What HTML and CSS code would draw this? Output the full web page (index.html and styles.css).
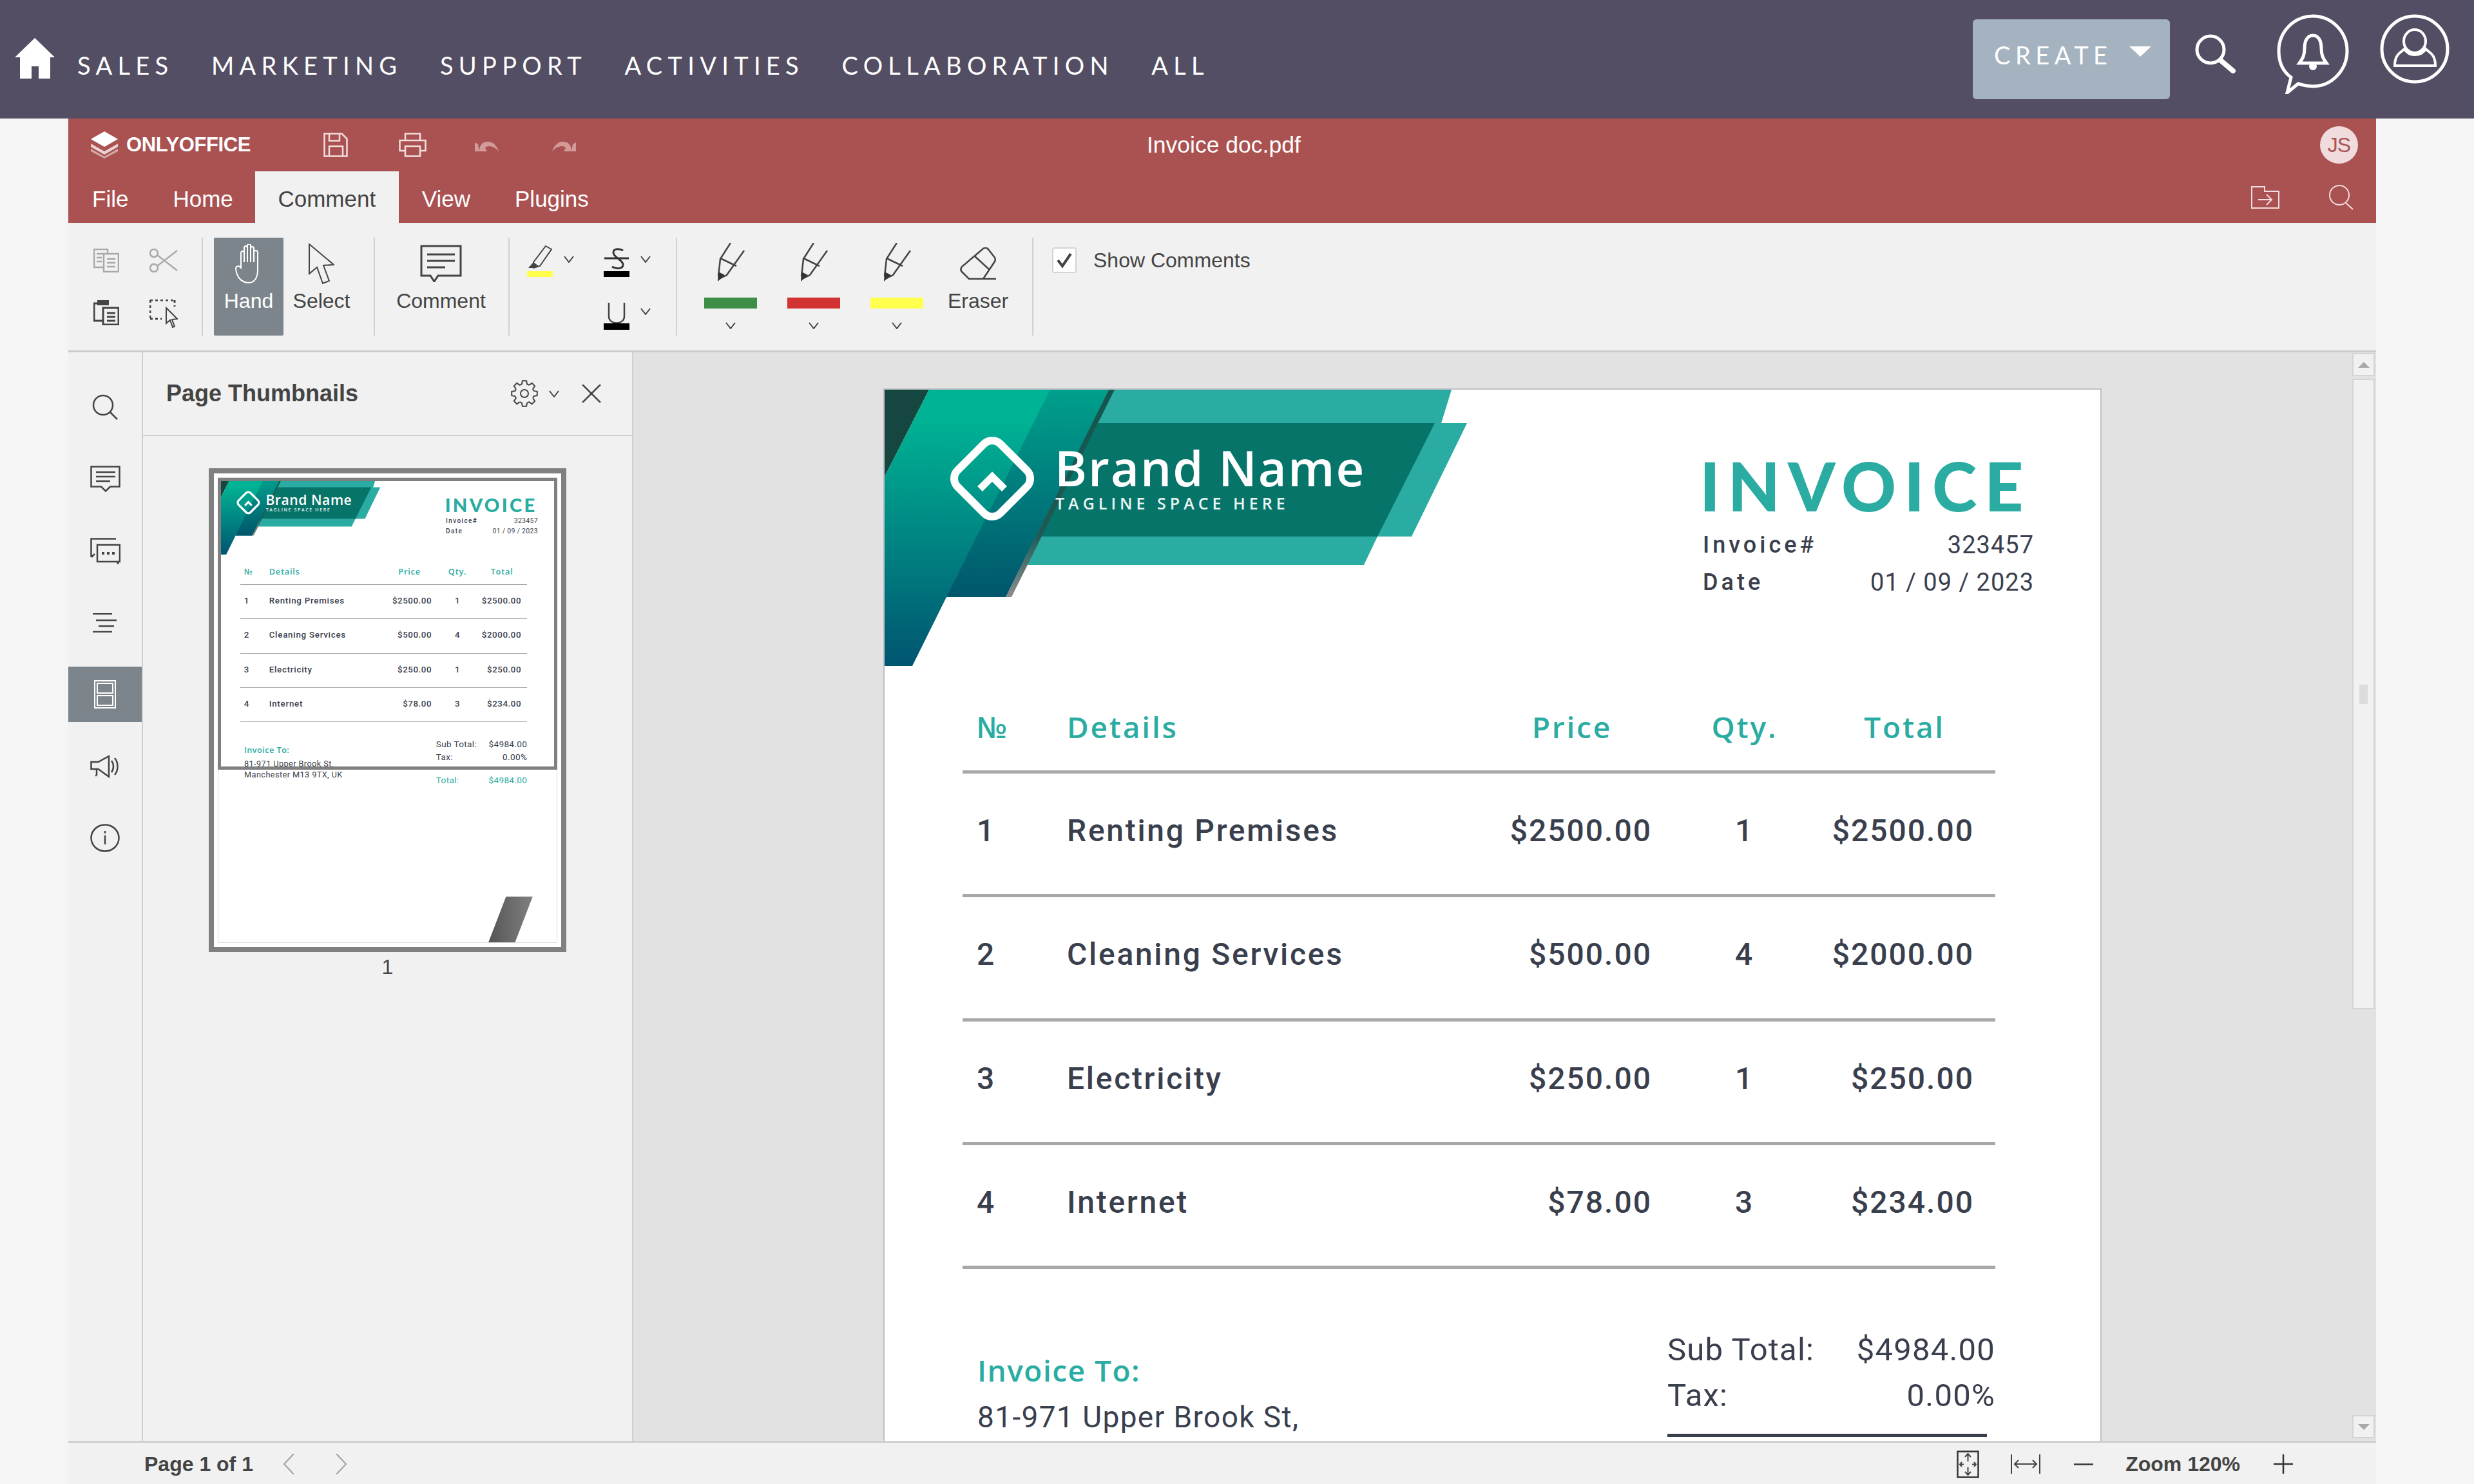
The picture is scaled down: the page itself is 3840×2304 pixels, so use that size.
FILE: index.html
```html
<!DOCTYPE html>
<html lang="en">
<head>
    <meta charset="UTF-8">
    <title>Invoice doc.pdf - ONLYOFFICE</title>
    <link rel="stylesheet" href="styles.css">
</head>
<body>
    <!-- shared icons -->
    <svg class="sprite" xmlns="http://www.w3.org/2000/svg">
        <defs>
            <linearGradient id="mainGrad" x1="0" y1="0" x2="0" y2="1">
                <stop offset="0.1" stop-color="#00b394"/>
                <stop offset="1" stop-color="#005570"/>
            </linearGradient>
            <linearGradient id="overGrad" x1="0" y1="0" x2="0" y2="1">
                <stop offset="0" stop-color="#00a08c"/>
                <stop offset="1" stop-color="#00566c"/>
            </linearGradient>
            <linearGradient id="edgeGrad" x1="0" y1="0" x2="0" y2="1">
                <stop offset="0" stop-color="#14564f"/>
                <stop offset="0.7" stop-color="#1e5a55"/>
                <stop offset="1" stop-color="#8c8c8c"/>
            </linearGradient>
        </defs>
        <symbol id="chev" viewBox="0 0 16 11"><path d="M1 1l7 9 7-9" fill="none" stroke="#444" stroke-width="2"/></symbol>
        <symbol id="pen-art" viewBox="0 0 44 60"><path d="M22 0L6 25 3 52M43 12L16 50 4 56M6 24l25 12" fill="none" stroke="#444" stroke-width="2.500"/><path d="M3 45l10 5-11 10z" fill="#333"/></symbol>
        <symbol id="banner-art" viewBox="0 0 904 429">
            <polygon points="357,0 880,0 864,52 904,52 818,228 765,228 744,272 221,272 240,50" fill="#2aaca2"/>
            <polygon points="331,52 854,52 765,228 242,228" fill="#07746a"/>
            <polygon points="0,0 69,0 0,135" fill="#15463f"/>
            <polygon points="69,0 348,0 188,322 96,322 43,429 0,429 0,135" fill="url(#mainGrad)"/>
            <polygon points="257,0 348,0 188,322 96,322" fill="url(#overGrad)"/>
            <polygon points="348,0 357,0 197,322 188,322" fill="url(#edgeGrad)"/>
            <rect x="120" y="91" width="94" height="94" rx="18" transform="rotate(45 167 138)" fill="none" stroke="#fff" stroke-width="12"/>
            <polyline points="148,154 167,135 186,154" fill="none" stroke="#fff" stroke-width="11"/>
        </symbol>
    </svg>

    <header class="topnav">
        <svg class="home-icon" width="62" height="63" viewBox="0 0 62 63"><path d="M31 0l31 30h-7v33H37V44H26v19H8V30H0z" fill="#fff"/></svg>
        <nav class="nav-links">
            <a>SALES</a>
            <a>MARKETING</a>
            <a>SUPPORT</a>
            <a>ACTIVITIES</a>
            <a>COLLABORATION</a>
            <a>ALL</a>
        </nav>
        <div class="nav-right">
            <button class="create-btn">CREATE<span class="caret"></span></button>
            <svg class="nav-search" width="64" height="61" viewBox="0 0 64 61"><circle cx="24" cy="24" r="21" fill="none" stroke="#fff" stroke-width="5"/><path d="M40 41l19 16" stroke="#fff" stroke-width="8" stroke-linecap="round"/></svg>
            <svg class="nav-bell" width="112" height="124" viewBox="0 0 112 124"><path d="M22 98C8 88 3 74 3 57 3 28 26 3 56 3s53 25 53 54-23 55-53 55c-9 0-16-2-23-4l-17 14z" fill="none" stroke="#fff" stroke-width="5"/><path d="M56 33c-9 0-13 9-13 20 0 11-3 16-8 23h42c-5-7-8-12-8-23 0-11-4-20-13-20z" fill="none" stroke="#fff" stroke-width="5"/><circle cx="56" cy="81" r="6" fill="#fff"/></svg>
            <svg class="nav-user" width="109" height="109" viewBox="0 0 109 109"><circle cx="54" cy="54" r="51" fill="none" stroke="#fff" stroke-width="5"/><ellipse cx="54" cy="42" rx="17" ry="18" fill="none" stroke="#fff" stroke-width="4"/><path d="M38 54c-6 6-15 8-15 26h63c0-18-9-20-15-26-4 7-10 9-17 9s-12-2-16-9z" fill="none" stroke="#fff" stroke-width="4"/></svg>
        </div>
    </header>

    <main class="editor">
        <div class="titlebar">
            <div class="brand">
                <svg width="43" height="42" viewBox="0 0 43 42"><path d="M21 0l21 12-21 12L0 12z" fill="#fff"/><path d="M0 19l21 12 21-12v5L21 36 0 24z" fill="#fff" opacity=".75"/><path d="M0 27l21 12 21-12v4L21 42 0 31z" fill="#fff" opacity=".5"/></svg>
                <span class="brand-name">ONLYOFFICE</span>
            </div>
            <div class="quick-tools">
                <svg width="38" height="38" viewBox="0 0 38 38"><path d="M1.500 1.500h27l8 8v27h-35zM9 1.500v11h16v-11M9 36.500V21h21v15.500" fill="none" stroke="#f3dede" stroke-width="2.500"/></svg>
                <svg class="qt-print" width="43" height="38" viewBox="0 0 43 38"><path d="M10 12V1.500h23V12M10 28H1.500V12h40v16H33M10 21h23v15.500H10z" fill="none" stroke="#f3dede" stroke-width="2.500"/></svg>
                <svg class="qt-undo" width="39" height="20" viewBox="0 0 39 20"><path d="M7 20C7 9 13 5 20 5c8 0 14 6 17 15-5-6-10-8-16-8-2 0-4 1-5 3l3 5H0V6l5 3" fill="#d39a9a"/></svg>
                <svg class="qt-redo" width="39" height="20" viewBox="0 0 39 20"><path d="M32 20C32 9 26 5 19 5 11 5 5 11 2 20c5-6 10-8 16-8 2 0 4 1 5 3l-3 5h19V6l-5 3" fill="#d39a9a"/></svg>
            </div>
            <div class="doc-title">Invoice doc.pdf</div>
            <div class="avatar">JS</div>
        </div>

        <div class="tabbar">
            <a class="tab">File</a>
            <a class="tab">Home</a>
            <a class="tab active">Comment</a>
            <a class="tab">View</a>
            <a class="tab">Plugins</a>
            <div class="tab-tools">
                <svg width="44" height="35" viewBox="0 0 44 35"><path d="M1 1h20v7h22v26H1zM11 21h21M24 13l8 8-8 8" fill="none" stroke="#f3dede" stroke-width="2"/></svg>
                <svg width="39" height="39" viewBox="0 0 39 39"><circle cx="17" cy="16" r="15" fill="none" stroke="#f3dede" stroke-width="2"/><path d="M27 28l11 10" stroke="#f3dede" stroke-width="2"/></svg>
            </div>
        </div>

        <div class="toolbar">
            <div class="tb-group g-clip">
                <svg width="40" height="37" viewBox="0 0 40 37"><path d="M22 7V1H1v28h15M5 8h10M5 14h8M5 20h8M16 8h23v28H16zM21 16h13M21 22h13M21 28h13" fill="none" stroke="#a8a8a8" stroke-width="2.500"/></svg>
                <svg width="44" height="37" viewBox="0 0 44 37"><circle cx="7" cy="30" r="6" fill="none" stroke="#a8a8a8" stroke-width="2.500"/><circle cx="7" cy="7" r="6" fill="none" stroke="#a8a8a8" stroke-width="2.500"/><path d="M12 10l31 24M12 27L43 3" stroke="#a8a8a8" stroke-width="2.500"/></svg>
                <svg width="40" height="40" viewBox="0 0 40 40"><path d="M15 6H1v27h14M15 13h24v26H15zM21 21h13M21 27h13M21 33h13" fill="none" stroke="#444" stroke-width="3"/><rect x="6" y="1" width="18" height="8" fill="#444"/></svg>
                <svg width="44" height="44" viewBox="0 0 44 44"><path d="M1 1h38M1 30h18M1 1v29M39 1v10" fill="none" stroke="#444" stroke-width="3" stroke-dasharray="4 4"/><path d="M26 13v24l6-5 4 11 3-1-4-11 8-1z" fill="#f1f1f1" stroke="#444" stroke-width="2"/></svg>
            </div>
            <div class="tb-group g-tools">
                <div class="tb-btn hand active">
                    <div class="tb-icon"><svg width="42" height="61" viewBox="0 0 42 61"><path d="M9 38V14c0-4 5-4 5 0v14-22c0-4 5-4 5 0v22V2c0-3 5-3 5 0v26V7c0-4 5-4 5 0v21V13c0-4 6-4 6 0v27c0 12-5 20-14 20C9 60 2 50 1 38c0-4 6-6 8 0z" fill="none" stroke="#fff" stroke-width="2"/></svg></div>
                    <span>Hand</span>
                </div>
                <div class="tb-btn select">
                    <div class="tb-icon"><svg width="40" height="63" viewBox="0 0 40 63"><path d="M1 1v46l12-10 9 25 10-4-9-24 16-1z" fill="none" stroke="#444" stroke-width="2"/></svg></div>
                    <span>Select</span>
                </div>
            </div>
            <div class="tb-group g-comment">
                <div class="tb-btn comment">
                    <div class="tb-icon"><svg width="65" height="58" viewBox="0 0 65 58"><path d="M2 2h61v46H28l-6 9-6-9H2zM11 15h43M11 25h43M11 35h28" fill="none" stroke="#444" stroke-width="3"/></svg></div>
                    <span>Comment</span>
                </div>
            </div>
            <div class="tb-group g-marks">
                <div class="drop">
                    <svg width="40" height="50" viewBox="0 0 40 50"><path d="M29 2l9 5-18 26-10 3 0-9z" fill="none" stroke="#444" stroke-width="2"/><path d="M2 36l8-9 8 6-7 3z" fill="#444"/><rect y="41" width="40" height="9" fill="#ffff4c"/></svg>
                    <svg class="drop-chev"><use href="#chev"/></svg>
                </div>
                <div class="drop">
                    <svg width="40" height="50" viewBox="0 0 40 50"><path d="M30 9c-4-3-15-4-15 3 0 8 15 11 15 19 0 7-11 7-17 3M1 21h38" fill="none" stroke="#333" stroke-width="3"/><rect y="41" width="40" height="9" fill="#000"/></svg>
                    <svg class="drop-chev"><use href="#chev"/></svg>
                </div>
                <div class="drop empty"></div>
                <div class="drop">
                    <svg width="40" height="51" viewBox="0 0 40 51"><path d="M8 9v21c0 14 24 14 24 0V9" fill="none" stroke="#444" stroke-width="2.500"/><rect y="41" width="40" height="10" fill="#000"/></svg>
                    <svg class="drop-chev"><use href="#chev"/></svg>
                </div>
            </div>
            <div class="tb-group g-pens">
                <div class="pen">
                    <svg width="44" height="60"><use href="#pen-art"/></svg>
                    <span class="pen-swatch green"></span>
                    <svg class="pen-chev"><use href="#chev"/></svg>
                </div>
                <div class="pen">
                    <svg width="44" height="60"><use href="#pen-art"/></svg>
                    <span class="pen-swatch red"></span>
                    <svg class="pen-chev"><use href="#chev"/></svg>
                </div>
                <div class="pen">
                    <svg width="44" height="60"><use href="#pen-art"/></svg>
                    <span class="pen-swatch yellow"></span>
                    <svg class="pen-chev"><use href="#chev"/></svg>
                </div>
                <div class="tb-btn eraser">
                    <div class="tb-icon"><svg width="56" height="51" viewBox="0 0 56 51"><path d="M36 2c3-2 6-1 8 1l10 13c1 2 1 4 0 6L36 49H14L3 38c-2-2-2-5 0-8zM22 13l23 21M14 49h42" fill="none" stroke="#444" stroke-width="2.500"/></svg></div>
                    <span>Eraser</span>
                </div>
            </div>
            <div class="tb-group g-show">
                <label class="show-comments">
                    <span class="checkbox"><svg width="26" height="26" viewBox="0 0 26 26"><path d="M3 13l7 9L23 3" fill="none" stroke="#444" stroke-width="4"/></svg></span>
                    Show Comments
                </label>
            </div>
        </div>

        <div class="workspace">
            <aside class="sidebar">
                <div class="side-item"><svg width="40" height="40" viewBox="0 0 40 40"><circle cx="17" cy="17" r="15" fill="none" stroke="#444" stroke-width="2.500"/><path d="M28 28l11 11" stroke="#444" stroke-width="2.500"/></svg></div>
                <div class="side-item"><svg width="47" height="41" viewBox="0 0 47 41"><path d="M1.500 1.500h44v31H31l-7 7-7-7H1.500zM9 10h30M9 17h30M9 24h22" fill="none" stroke="#444" stroke-width="2.500"/></svg></div>
                <div class="side-item"><svg width="47" height="41" viewBox="0 0 47 41"><path d="M40 1.500H1.500V30M11 11h35v26H11zM2 30l5-5" fill="none" stroke="#444" stroke-width="2.500"/><path d="M18 24h4M26 24h4M34 24h4" stroke="#444" stroke-width="4"/><path d="M43 37v4" stroke="#444" stroke-width="3"/></svg></div>
                <div class="side-item"><svg width="38" height="30" viewBox="0 0 38 30"><path d="M0 1h30M5 11h32M9 20h24M0 29h30" stroke="#444" stroke-width="2.500"/></svg></div>
                <div class="side-item active"><svg width="34" height="44" viewBox="0 0 34 44"><path d="M1 1h32v42H1zM5 5h24v15H5zM5 24h24v15H5z" fill="none" stroke="#fff" stroke-width="2"/></svg></div>
                <div class="side-item"><svg width="46" height="36" viewBox="0 0 46 36"><path d="M1.500 11h11L29 2v32L12.500 22h-11zM10 22v10M10 32h-2M33 9c4 5 4 13 0 18M38 5c6 7 6 19 0 26" fill="none" stroke="#444" stroke-width="2.500"/></svg></div>
                <div class="side-item"><svg width="46" height="44" viewBox="0 0 46 44"><ellipse cx="23" cy="22" rx="21.500" ry="20.500" fill="none" stroke="#444" stroke-width="2.500"/><path d="M23 18v14M23 11v4" stroke="#444" stroke-width="2.500"/></svg></div>
            </aside>

            <section class="thumb-panel">
                <div class="panel-head">
                    <h2>Page Thumbnails</h2>
                    <svg class="panel-gear" width="42" height="42" viewBox="0 0 42 42">
                        <g fill="none" stroke="#444" stroke-width="2">
                            <path d="M16.870 6.580L17.870 1.250H24.130L25.130 6.580A15 15 0 0 1 28.270 7.880"/>
                            <path transform="rotate(45 21 21)" d="M16.870 6.580L17.870 1.250H24.130L25.130 6.580A15 15 0 0 1 28.270 7.880"/>
                            <path transform="rotate(90 21 21)" d="M16.870 6.580L17.870 1.250H24.130L25.130 6.580A15 15 0 0 1 28.270 7.880"/>
                            <path transform="rotate(135 21 21)" d="M16.870 6.580L17.870 1.250H24.130L25.130 6.580A15 15 0 0 1 28.270 7.880"/>
                            <path transform="rotate(180 21 21)" d="M16.870 6.580L17.870 1.250H24.130L25.130 6.580A15 15 0 0 1 28.270 7.880"/>
                            <path transform="rotate(225 21 21)" d="M16.870 6.580L17.870 1.250H24.130L25.130 6.580A15 15 0 0 1 28.270 7.880"/>
                            <path transform="rotate(270 21 21)" d="M16.870 6.580L17.870 1.250H24.130L25.130 6.580A15 15 0 0 1 28.270 7.880"/>
                            <path transform="rotate(315 21 21)" d="M16.870 6.580L17.870 1.250H24.130L25.130 6.580A15 15 0 0 1 28.270 7.880"/>
                            <circle cx="21" cy="21" r="6"/>
                        </g>
                    </svg>
                    <svg class="panel-chev"><use href="#chev"/></svg>
                    <svg class="panel-close" width="30" height="28" viewBox="0 0 30 28"><path d="M1 0l28 28M29 0L1 28" stroke="#444" stroke-width="2.500"/></svg>
                </div>
                <div class="thumb-wrap">
                    <div class="thumb-frame">
                        <div class="thumb-scale">
                            <article class="page">
                                <div class="page-head">
                                    <svg class="banner" width="904" height="429" viewBox="0 0 904 429"><use href="#banner-art" width="904" height="429"/><text class="brand-text" x="264" y="150">Brand Name</text><text class="tagline-text" x="265" y="186">TAGLINE SPACE HERE</text></svg>
                                    <div class="meta">
                                        <h1>INVOICE</h1>
                                        <div class="meta-row"><b>Invoice#</b><span>323457</span></div>
                                        <div class="meta-row"><b>Date</b><span>01 / 09 / 2023</span></div>
                                    </div>
                                </div>
                                <div class="inv-table">
                                    <div class="inv-row inv-head"><span class="c-no">№</span><span class="c-det">Details</span><span class="c-price">Price</span><span class="c-qty">Qty.</span><span class="c-total">Total</span></div>
                                    <div class="inv-row"><span class="c-no">1</span><span class="c-det">Renting Premises</span><span class="c-price">$2500.00</span><span class="c-qty">1</span><span class="c-total">$2500.00</span></div>
                                    <div class="inv-row"><span class="c-no">2</span><span class="c-det">Cleaning Services</span><span class="c-price">$500.00</span><span class="c-qty">4</span><span class="c-total">$2000.00</span></div>
                                    <div class="inv-row"><span class="c-no">3</span><span class="c-det">Electricity</span><span class="c-price">$250.00</span><span class="c-qty">1</span><span class="c-total">$250.00</span></div>
                                    <div class="inv-row"><span class="c-no">4</span><span class="c-det">Internet</span><span class="c-price">$78.00</span><span class="c-qty">3</span><span class="c-total">$234.00</span></div>
                                </div>
                                <div class="inv-foot">
                                    <div class="bill-to">
                                        <h3>Invoice To:</h3>
                                        <p>81-971 Upper Brook St,</p>
                                        <p>Manchester M13 9TX, UK</p>
                                    </div>
                                    <div class="totals">
                                        <div class="total-row"><span>Sub Total:</span><span>$4984.00</span></div>
                                        <div class="total-row"><span>Tax:</span><span>0.00%</span></div>
                                        <div class="total-rule"></div>
                                        <div class="total-row grand"><span>Total:</span><span>$4984.00</span></div>
                                    </div>
                                </div>
                                <div class="page-corner"></div>
                            </article>
                        </div>
                        <div class="thumb-view"></div>
                    </div>
                    <div class="thumb-num">1</div>
                </div>
            </section>

            <section class="canvas">
                <div class="doc-area">
                    <article class="page">
                        <div class="page-head">
                            <svg class="banner" width="904" height="429" viewBox="0 0 904 429"><use href="#banner-art" width="904" height="429"/><text class="brand-text" x="264" y="150">Brand Name</text><text class="tagline-text" x="265" y="186">TAGLINE SPACE HERE</text></svg>
                            <div class="meta">
                                <h1>INVOICE</h1>
                                <div class="meta-row"><b>Invoice#</b><span>323457</span></div>
                                <div class="meta-row"><b>Date</b><span>01 / 09 / 2023</span></div>
                            </div>
                        </div>
                        <div class="inv-table">
                            <div class="inv-row inv-head"><span class="c-no">№</span><span class="c-det">Details</span><span class="c-price">Price</span><span class="c-qty">Qty.</span><span class="c-total">Total</span></div>
                            <div class="inv-row"><span class="c-no">1</span><span class="c-det">Renting Premises</span><span class="c-price">$2500.00</span><span class="c-qty">1</span><span class="c-total">$2500.00</span></div>
                            <div class="inv-row"><span class="c-no">2</span><span class="c-det">Cleaning Services</span><span class="c-price">$500.00</span><span class="c-qty">4</span><span class="c-total">$2000.00</span></div>
                            <div class="inv-row"><span class="c-no">3</span><span class="c-det">Electricity</span><span class="c-price">$250.00</span><span class="c-qty">1</span><span class="c-total">$250.00</span></div>
                            <div class="inv-row"><span class="c-no">4</span><span class="c-det">Internet</span><span class="c-price">$78.00</span><span class="c-qty">3</span><span class="c-total">$234.00</span></div>
                        </div>
                        <div class="inv-foot">
                            <div class="bill-to">
                                <h3>Invoice To:</h3>
                                <p>81-971 Upper Brook St,</p>
                            </div>
                            <div class="totals">
                                <div class="total-row"><span>Sub Total:</span><span>$4984.00</span></div>
                                <div class="total-row"><span>Tax:</span><span>0.00%</span></div>
                                <div class="total-rule"></div>
                            </div>
                        </div>
                    </article>
                </div>
                <div class="scrollbar">
                    <div class="sb-btn"><span class="sb-up"></span></div>
                    <div class="sb-thumb"><span class="sb-grip"></span></div>
                    <div class="sb-track"></div>
                    <div class="sb-btn"><span class="sb-down"></span></div>
                </div>
            </section>
        </div>

        <footer class="statusbar">
            <span class="page-count">Page 1 of 1</span>
            <svg class="st-prev" width="17" height="32" viewBox="0 0 17 32"><path d="M16 0L1 16l15 16" fill="none" stroke="#a0a0a0" stroke-width="2"/></svg>
            <svg class="st-next" width="17" height="32" viewBox="0 0 17 32"><path d="M1 0l15 16L1 32" fill="none" stroke="#a0a0a0" stroke-width="2"/></svg>
            <div class="st-right">
                <svg width="35" height="43" viewBox="0 0 35 43"><path d="M1.500 1.500h32v40h-32z" fill="none" stroke="#333" stroke-width="2.500"/><path d="M17.500 5v12M13 10l4.500-5 4.500 5M17.500 38V26M13 33l4.500 5 4.500-5M5 21.500h6M8 18l-3 3.500 3 3.500M30 21.500h-6M27 18l3 3.500-3 3.500" fill="none" stroke="#444" stroke-width="2"/></svg>
                <svg class="st-fitw" width="46" height="30" viewBox="0 0 46 30"><path d="M1 0v30M45 0v30M6 15h34M12 9l-6 6 6 6M34 9l6 6-6 6" fill="none" stroke="#444" stroke-width="2"/></svg>
                <svg class="st-minus" width="30" height="3" viewBox="0 0 30 3"><path d="M0 1.500h30" stroke="#333" stroke-width="2.500"/></svg>
                <span class="zoom-label">Zoom 120%</span>
                <svg class="st-plus" width="30" height="30" viewBox="0 0 30 30"><path d="M0 15h30M15 0v30" stroke="#333" stroke-width="2.500"/></svg>
            </div>
        </footer>
    </main>
</body>
</html>
```

FILE: styles.css
```css
* {
    margin: 0;
    padding: 0;
    box-sizing: border-box;
}

body {
    font-family: 'Liberation Sans', Arial, sans-serif;
    background-color: #f5f5f5;
    color: #444444;
    width: 3840px;
    height: 2304px;
    display: flex;
    flex-direction: column;
    overflow: hidden;
}

svg {
    display: block;
    flex: none;
}

.sprite {
    position: absolute;
    width: 0;
    height: 0;
}

/* top navigation */
.topnav {
    height: 184px;
    flex: none;
    background-color: #534e63;
    display: flex;
    align-items: flex-start;
    padding: 0 37px 0 23px;
}

.home-icon {
    margin-top: 59px;
}

.nav-links {
    display: flex;
    gap: 58.500px;
    margin-left: 35px;
    padding-top: 78px;
    font-family: Lato, sans-serif;
    font-size: 38px;
    line-height: 46px;
    letter-spacing: 8.300px;
    color: #ffffff;
}

.nav-right {
    display: flex;
    align-items: flex-start;
    margin-left: auto;
}

.create-btn {
    width: 306px;
    height: 124px;
    margin-top: 30px;
    padding: 32px 0 0 33px;
    background-color: #a4b3bf;
    border: none;
    border-radius: 6px;
    color: #ffffff;
    font-family: Lato, sans-serif;
    font-size: 38px;
    letter-spacing: 7.500px;
    line-height: 46px;
    display: flex;
    align-items: flex-start;
}

.caret {
    width: 0;
    height: 0;
    margin: 10px 0 0 26px;
    border-left: 17px solid transparent;
    border-right: 17px solid transparent;
    border-top: 16px solid #ffffff;
}

.nav-search {
    margin: 53px 0 0 39px;
}

.nav-bell {
    margin: 22px 0 0 63px;
}

.nav-user {
    margin: 22px 0 0 48px;
}

/* editor frame */
.editor {
    flex: 1;
    margin: 0 152px 0 106px;
    display: flex;
    flex-direction: column;
    min-height: 0;
}

.titlebar {
    height: 82px;
    flex: none;
    background-color: #aa5252;
    color: #ffffff;
    display: flex;
    align-items: center;
    position: relative;
}

.brand {
    display: flex;
    align-items: center;
    margin-left: 35px;
    width: 361px;
}

.brand-name {
    margin-left: 12px;
    font-size: 31px;
    font-weight: 700;
    letter-spacing: -0.400px;
}

.quick-tools {
    display: flex;
    align-items: center;
}

.qt-print {
    margin-left: 79px;
}

.qt-undo {
    margin-left: 75px;
}

.qt-redo {
    margin-left: 79px;
}

.doc-title {
    position: absolute;
    left: 1674px;
    top: 20px;
    font-size: 35.500px;
    line-height: 42px;
}

.avatar {
    width: 59px;
    height: 58px;
    margin-left: auto;
    margin-right: 28px;
    border-radius: 50%;
    background-color: #f0dcdc;
    color: #aa5252;
    font-size: 32px;
    letter-spacing: -1px;
    display: flex;
    align-items: center;
    justify-content: center;
}

.tabbar {
    height: 80px;
    flex: none;
    background-color: #aa5252;
    display: flex;
    align-items: flex-end;
    padding-left: 37px;
    color: #ffffff;
    font-size: 35px;
}

.tab {
    height: 80px;
    line-height: 86px;
    margin-right: 69px;
}

.tab:nth-child(2) {
    margin-right: 34px;
}

.tab.active {
    width: 223px;
    margin-right: 36px;
    background-color: #f1f1f1;
    color: #444444;
    text-align: center;
}

.tab-tools {
    margin-left: auto;
    margin-right: 35px;
    margin-bottom: 20px;
    display: flex;
    align-items: center;
    gap: 76px;
}

/* toolbar */
.toolbar {
    height: 198px;
    flex: none;
    background-color: #f1f1f1;
    display: flex;
    align-items: flex-start;
    padding-top: 23px;
}

.tb-group {
    height: 152px;
    flex: none;
    border-right: 2px solid #d0d0d0;
}

.g-clip {
    width: 209px;
    padding: 17px 0 0 39px;
    display: grid;
    grid-template-columns: 87px 44px;
    grid-template-rows: 79px 44px;
}

.g-tools {
    width: 267px;
    padding-left: 17px;
    display: flex;
}

.g-comment {
    width: 209px;
}

.g-marks {
    width: 260px;
    padding: 11px 0 0 27px;
    display: grid;
    grid-template-columns: 119px 80px;
    grid-auto-rows: 81px;
}

.g-pens {
    width: 553px;
    padding-left: 18px;
    display: flex;
}

.g-show {
    border-right: none;
    padding: 15px 0 0 29px;
}

.tb-btn {
    display: flex;
    flex-direction: column;
    align-items: center;
    font-size: 32px;
    line-height: 36px;
}

.tb-icon {
    height: 80px;
    display: flex;
    align-items: center;
    justify-content: center;
}

.tb-btn.hand {
    width: 108px;
    height: 152px;
    border-radius: 2px;
}

.tb-btn.active {
    background-color: #7d858c;
    color: #ffffff;
}

.tb-btn.select {
    width: 118px;
}

.tb-btn.comment {
    width: 205px;
}

.tb-btn.eraser {
    width: 124px;
}

.drop {
    display: flex;
    gap: 17px;
}

.drop-chev {
    width: 16px;
    height: 11px;
    margin-top: 17px;
}

.pen {
    width: 129px;
    padding-top: 8px;
    display: flex;
    flex-direction: column;
    align-items: center;
}

.pen-swatch {
    width: 82px;
    height: 17px;
    margin-top: 25px;
}

.pen-swatch.green {
    background-color: #3e8e48;
}

.pen-swatch.red {
    background-color: #d33232;
}

.pen-swatch.yellow {
    background-color: #ffff4c;
}

.pen-chev {
    width: 16px;
    height: 11px;
    margin-top: 21px;
}

.show-comments {
    display: flex;
    align-items: center;
    gap: 26px;
    font-size: 32px;
}

.checkbox {
    width: 38px;
    height: 40px;
    background-color: #ffffff;
    border: 2px solid #d4d4d4;
    border-radius: 4px;
    display: flex;
    align-items: center;
    justify-content: center;
}

/* workspace */
.workspace {
    flex: 1;
    min-height: 0;
    display: flex;
    border-top: 3px solid #cbcbcb;
}

.sidebar {
    width: 116px;
    flex: none;
    background-color: #f1f1f1;
    border-right: 2px solid #cfcfcf;
    padding-top: 42px;
    display: flex;
    flex-direction: column;
    gap: 25.500px;
}

.side-item {
    height: 86px;
    flex: none;
    display: flex;
    align-items: center;
    justify-content: center;
}

.side-item.active {
    background-color: #7d858c;
}

.thumb-panel {
    width: 761px;
    flex: none;
    background-color: #f1f1f1;
    border-right: 2px solid #cfcfcf;
    overflow: hidden;
}

.panel-head {
    height: 130px;
    display: flex;
    align-items: center;
    padding-left: 36px;
    border-bottom: 2px solid #d0d0d0;
}

.panel-head h2 {
    font-size: 36px;
    font-weight: 700;
    width: 535px;
}

.panel-chev {
    width: 16px;
    height: 11px;
    margin-left: 17px;
}

.panel-close {
    margin-left: 35px;
}

.thumb-wrap {
    width: 555px;
    margin: 50px 0 0 102px;
}

.thumb-frame {
    position: relative;
    height: 751px;
    border: 8px solid #808080;
    padding: 7px;
    background-color: #ffffff;
    overflow: hidden;
}

.thumb-scale {
    zoom: 0.278;
    height: 2595px;
}

.thumb-view {
    position: absolute;
    left: 6px;
    top: 7px;
    width: 527px;
    height: 453px;
    border: 5px solid #808080;
}

.thumb-num {
    margin-top: 3px;
    font-size: 32px;
    line-height: 40px;
    text-align: center;
}

/* document area */
.canvas {
    flex: 1;
    min-width: 0;
    display: flex;
    background-color: #e2e2e2;
}

.doc-area {
    flex: 1;
    min-width: 0;
    overflow: hidden;
    padding: 58px 0 0 390px;
}

.scrollbar {
    width: 35px;
    flex: none;
    margin-right: 2px;
    padding: 1px 0 4px;
    display: flex;
    flex-direction: column;
}

.sb-btn {
    height: 36px;
    flex: none;
    background-color: #f1f1f1;
    border: 2px solid #d4d4d4;
    display: flex;
    align-items: center;
    justify-content: center;
}

.sb-up,
.sb-down {
    width: 0;
    height: 0;
    border-left: 9px solid transparent;
    border-right: 9px solid transparent;
}

.sb-up {
    border-bottom: 9px solid #a8a8a8;
}

.sb-down {
    border-top: 9px solid #a8a8a8;
}

.sb-thumb {
    height: 979px;
    flex: none;
    margin-top: 4px;
    background-color: #f1f1f1;
    border: 2px solid #d4d4d4;
    display: flex;
    align-items: center;
    justify-content: center;
}

.sb-grip {
    width: 13px;
    height: 30px;
    background-color: #dcdcdc;
}

.sb-track {
    flex: 1;
}

/* invoice page */
.page {
    position: relative;
    width: 1887px;
    height: 2595px;
    background-color: #ffffff;
    color: #3a3f4e;
    box-shadow: 0 0 0 2px #bfbfc6;
    font-family: Roboto, sans-serif;
}

.page-head {
    display: flex;
    height: 429px;
}

.brand-text {
    font-family: 'Open Sans', sans-serif;
    font-size: 76px;
    font-weight: 600;
    letter-spacing: 2px;
    fill: #ffffff;
}

.tagline-text {
    font-family: 'Open Sans', sans-serif;
    font-size: 25px;
    font-weight: 600;
    letter-spacing: 6px;
    fill: #e8f5f3;
}

.meta {
    margin-left: 361px;
    width: 519px;
    padding-top: 92px;
}

.meta h1 {
    font-family: Lato, sans-serif;
    font-size: 105px;
    font-weight: 900;
    line-height: 112px;
    letter-spacing: 12px;
    color: #2aaca2;
    margin-bottom: 8px;
}

.meta-row {
    display: flex;
    justify-content: space-between;
    font-size: 38px;
    line-height: 58px;
    letter-spacing: 1px;
    padding-left: 5px;
}

.meta-row b {
    font-size: 36px;
    font-weight: 500;
    letter-spacing: 5px;
}

.inv-table {
    margin-left: 121px;
    width: 1603px;
}

.inv-row {
    display: grid;
    grid-template-columns: 162px 660px 248px 248px 252px;
    align-items: center;
    height: 192.250px;
    padding-bottom: 10px;
    border-bottom: 5px solid #a8a8a8;
    font-size: 48px;
    font-weight: 500;
    letter-spacing: 2.700px;
}

.inv-head {
    height: 167px;
    padding-bottom: 37px;
    align-items: end;
    color: #2aaca2;
    font-family: 'Open Sans', sans-serif;
    font-size: 46px;
    font-weight: 600;
    letter-spacing: 2.800px;
}

.c-no {
    padding-left: 22px;
}

.c-price,
.c-total {
    text-align: right;
    letter-spacing: 2px;
}

.c-qty {
    padding-left: 40px;
    text-align: center;
}

.inv-head .c-price {
    padding-right: 62px;
    letter-spacing: 2.800px;
}

.inv-head .c-total {
    padding-right: 45px;
    letter-spacing: 2.800px;
}

.inv-foot {
    margin: 90px 0 0 121px;
    width: 1603px;
    display: flex;
    justify-content: space-between;
    font-size: 46px;
}

.bill-to {
    padding: 36px 0 0 23px;
}

.bill-to h3 {
    font-family: 'Open Sans', sans-serif;
    font-size: 46px;
    font-weight: 600;
    letter-spacing: 1.500px;
    color: #2aaca2;
    line-height: 62px;
    margin-bottom: 11px;
}

.bill-to p {
    line-height: 62px;
    letter-spacing: 1.400px;
}

.totals {
    width: 509px;
    font-size: 49px;
    letter-spacing: 1.200px;
}

.total-row {
    display: flex;
    justify-content: space-between;
    line-height: 71px;
}

.total-rule {
    width: 496px;
    height: 5px;
    margin-top: 24px;
    background-color: #3a3f4e;
}

.total-row.grand {
    margin-top: 29px;
    color: #2aaca2;
}

.page-corner {
    position: absolute;
    right: 132px;
    bottom: 0;
    width: 248px;
    height: 258px;
    background: linear-gradient(90deg, #555555, #808080);
    clip-path: polygon(40% 0, 100% 0, 60% 100%, 0 100%);
}

/* status bar */
.statusbar {
    height: 67px;
    flex: none;
    background-color: #f1f1f1;
    border-top: 3px solid #d0d0d0;
    display: flex;
    align-items: center;
    padding: 2px 0 0 118px;
    font-size: 32px;
    font-weight: 700;
}

.page-count {
    width: 216px;
}

.st-next {
    margin-left: 64px;
}

.st-right {
    margin-left: auto;
    margin-right: 129px;
    display: flex;
    align-items: center;
}

.st-fitw {
    margin-left: 49px;
}

.st-minus {
    margin-left: 52px;
}

.zoom-label {
    margin-left: 50px;
}

.st-plus {
    margin-left: 52px;
}
```
